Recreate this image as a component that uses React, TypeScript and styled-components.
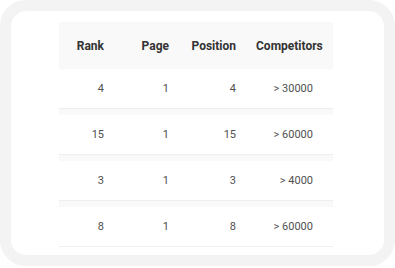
import React from "react";
import styled, { createGlobalStyle } from "styled-components";

const Global = createGlobalStyle`
  html, body { margin: 0; padding: 0; background: #ffffff; }
  body { font-family: Roboto, "Liberation Sans", Arial, sans-serif; }
  * { box-sizing: border-box; }
`;

const Card = styled.div`
  width: 395px;
  height: 266px;
  border: 11px solid #f3f3f3;
  border-radius: 26px;
  background: #ffffff;
  overflow: hidden;
  padding: 11px 0 0 48px;
`;

const Table = styled.div`
  width: 274px;
  background: #f9f9f9;
  display: flex;
  flex-direction: column;
  gap: 6px;
`;

const Row = styled.div<{ $head?: boolean }>`
  display: grid;
  grid-template-columns: 65px 65px 67px 77px;
  align-items: center;
  height: ${(p) => (p.$head ? "47px" : "40px")};
  background: ${(p) => (p.$head ? "#f9f9f9" : "#ffffff")};
  border-bottom: ${(p) => (p.$head ? "none" : "1px solid #eeeeee")};
  margin-bottom: ${(p) => (p.$head ? "-6px" : "0")};
`;

const Cell = styled.div<{ $head?: boolean }>`
  text-align: right;
  padding-right: 20px;
  font-size: ${(p) => (p.$head ? "12px" : "11px")};
  font-weight: ${(p) => (p.$head ? 700 : 400)};
  color: ${(p) => (p.$head ? "#333333" : "#505050")};
  white-space: nowrap;
`;

const rows = [
  ["4", "1", "4", "> 30000"],
  ["15", "1", "15", "> 60000"],
  ["3", "1", "3", "> 4000"],
  ["8", "1", "8", "> 60000"],
];

export default function App() {
  return (
    <>
      <Global />
      <Card>
        <Table>
          <Row $head>
            <Cell $head>Rank</Cell>
            <Cell $head>Page</Cell>
            <Cell $head>Position</Cell>
            <Cell $head>Competitors</Cell>
          </Row>
          {rows.map((r, i) => (
            <Row key={i}>
              {r.map((c, j) => (
                <Cell key={j}>{c}</Cell>
              ))}
            </Row>
          ))}
        </Table>
      </Card>
    </>
  );
}
